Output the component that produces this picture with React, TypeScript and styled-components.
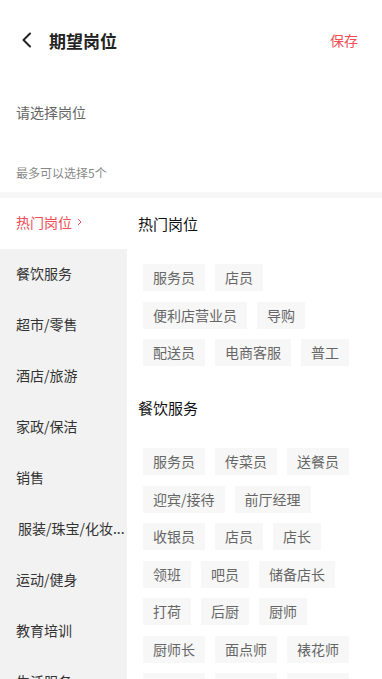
import styled, { createGlobalStyle } from "styled-components";

const Global = createGlobalStyle`
    body{
        margin:0;
        background:#fff;
        font-family: "Noto Sans CJK SC", "Noto Sans", sans-serif;
    }
    *{ box-sizing: border-box; }
`;

const Page = styled.div`
    width: 382px;
    height: 679px;
    overflow: hidden;
    display: flex;
    flex-direction: column;
    background: #fff;
`;

const Header = styled.div`
    height: 80px;
    display: flex;
    align-items: center;
    padding: 0 24px 0 20px;
    flex-shrink: 0;

    h1{
        margin: 0 0 0 15px;
        font-size: 17px;
        font-weight: bold;
        color: #222;
        flex: 1;
    }
    .save{
        font-size: 14px;
        color: #ee4d57;
    }
`;

const Picker = styled.div`
    padding: 22px 16px 0;
    font-size: 14px;
    line-height: 20px;
    color: #666;
    flex-shrink: 0;
`;

const Hint = styled.div`
    padding: 42px 16px 0;
    font-size: 12px;
    line-height: 17px;
    color: #888;
    height: 70px;
    flex-shrink: 0;
`;

const Divider = styled.div`
    height: 6px;
    background: #f7f7f7;
    flex-shrink: 0;
`;

const Body = styled.div`
    flex: 1;
    display: flex;
    min-height: 0;
`;

const Sidebar = styled.div`
    width: 127px;
    flex-shrink: 0;
    background: #f2f2f2;
`;

const NavItem = styled.div<{ $active?: boolean; $indent?: number }>`
    height: 51px;
    display: flex;
    align-items: center;
    padding: 0 0 3px ${(p) => p.$indent ?? 16}px;
    font-size: 14px;
    color: ${(p) => (p.$active ? "#ee4d57" : "#333")};
    background: ${(p) => (p.$active ? "#fff" : "transparent")};

    span{
        white-space: nowrap;
    }
    svg{ margin-left: 5px; flex-shrink: 0; }
`;

const Content = styled.div`
    flex: 1;
    padding: 0 20px 0 11px;
`;

const Section = styled.div`
    padding: 16px 0 16px;

    h3{
        margin: 0 0 30px;
        font-size: 15px;
        line-height: 20px;
        font-weight: normal;
        color: #111;
    }
`;

const Tags = styled.div`
    display: flex;
    flex-wrap: wrap;
    gap: 10.5px 10px;
    padding-left: 5px;
`;

const Tag = styled.div`
    height: 27px;
    line-height: 27px;
    padding: 0 10px;
    font-size: 14px;
    color: #666;
    background: #f7f7f7;
    white-space: nowrap;
`;

const navs = [
    "热门岗位",
    "餐饮服务",
    "超市/零售",
    "酒店/旅游",
    "家政/保洁",
    "销售",
    "服装/珠宝/化妆...",
    "运动/健身",
    "教育培训",
    "生活服务",
];

const sections = [
    { title: "热门岗位", tags: ["服务员", "店员", "便利店营业员", "导购", "配送员", "电商客服", "普工"] },
    {
        title: "餐饮服务",
        tags: [
            "服务员", "传菜员", "送餐员", "迎宾/接待", "前厅经理", "收银员", "店员", "店长",
            "领班", "吧员", "储备店长", "打荷", "后厨", "厨师", "厨师长", "面点师", "裱花师",
            "西点师", "洗碗工", "配菜员",
        ],
    },
];

function App() {
    return (<Page>
        <Global />
        <Header>
            <svg width="14" height="16" viewBox="0 0 14 16">
                <path d="M10 1.5 L3.5 8 L10 14.5" fill="none" stroke="#222" strokeWidth="2" strokeLinecap="round" strokeLinejoin="round" />
            </svg>
            <h1>期望岗位</h1>
            <span className="save">保存</span>
        </Header>
        <Picker>请选择岗位</Picker>
        <Hint>最多可以选择5个</Hint>
        <Divider />
        <Body>
            <Sidebar>
                {navs.map((n, i) => (
                    <NavItem key={n} $active={i === 0} $indent={n.length > 8 ? 18 : 16}>
                        <span>{n}</span>
                        {i === 0 && (
                            <svg width="5" height="8" viewBox="0 0 5 8">
                                <path d="M1 1 L4 4 L1 7" fill="none" stroke="#ee4d57" strokeWidth="1" />
                            </svg>
                        )}
                    </NavItem>
                ))}
            </Sidebar>
            <Content>
                {sections.map((s) => (
                    <Section key={s.title}>
                        <h3>{s.title}</h3>
                        <Tags>
                            {s.tags.map((t, i) => <Tag key={i}>{t}</Tag>)}
                        </Tags>
                    </Section>
                ))}
            </Content>
        </Body>
    </Page>);
}

export default App;
